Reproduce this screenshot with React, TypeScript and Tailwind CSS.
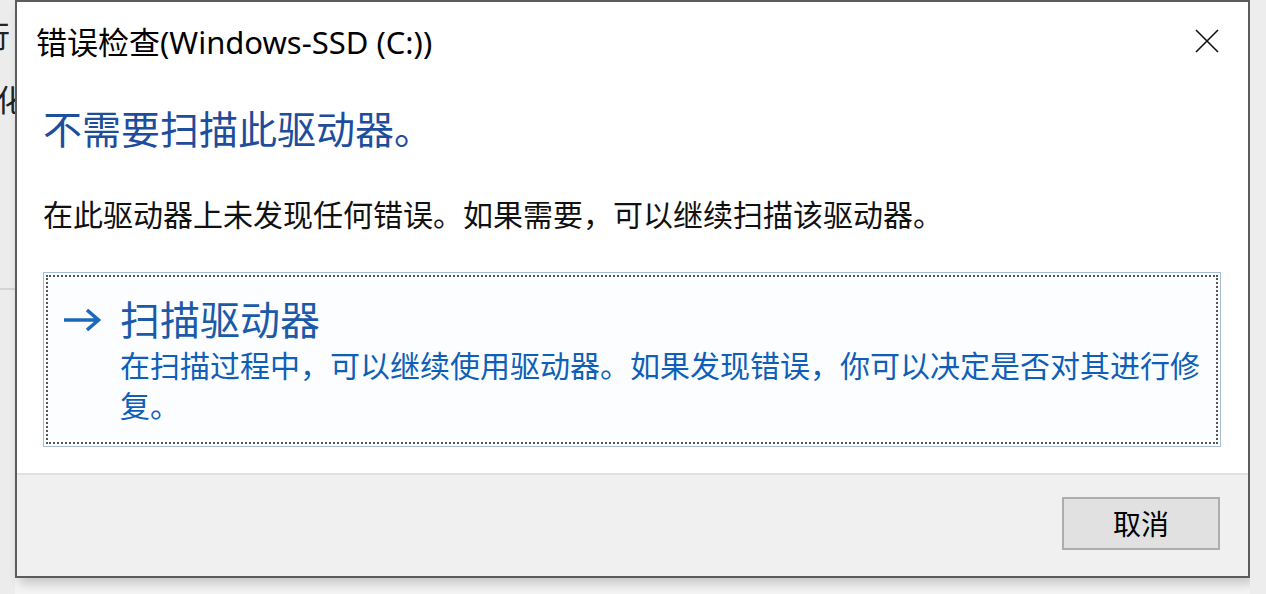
import React from "react";

const cjk = '"Noto Sans", "Noto Sans CJK SC", sans-serif';

export default function App() {
  return (
    <div
      className="w-[1266px] h-[594px] bg-[#f4f4f4] flex overflow-hidden"
      style={{ fontFamily: cjk }}
    >
      {/* left background window strip */}
      <div className="w-[15px] h-full shrink-0 bg-[#ececec] flex flex-col overflow-hidden">
        <div className="h-[290px] border-b-2 border-[#d4d4d4] flex flex-col">
          <div className="text-[30px] leading-[40px] text-[#222] ml-[-20px] mt-[16px] whitespace-nowrap">行</div>
          <div className="text-[30px] leading-[40px] text-[#222] ml-[-4px] mt-[24px] whitespace-nowrap">化</div>
        </div>
      </div>

      {/* dialog */}
      <div className="w-[1235px] h-[578px] shrink-0 border-2 border-[#5c5c5c] bg-white flex flex-col shadow-[4px_6px_10px_rgba(0,0,0,0.18)]">
        {/* title bar */}
        <div className="h-[78px] flex items-start justify-between pl-[19px] pr-[28px] pt-[20px]">
          <div className="text-[31px] leading-[40px] text-black whitespace-nowrap">
            错误检查(Windows-SSD (C:))
          </div>
          <svg width="26" height="26" viewBox="0 0 26 26" className="mt-[6px]">
            <path d="M2 2 L24 24 M24 2 L2 24" stroke="#111" strokeWidth="1.6" fill="none" />
          </svg>
        </div>

        {/* content */}
        <div className="flex-1 flex flex-col pl-[26px] pr-[26px]">
          <div className="text-[39px] leading-[48px] text-[#1e4d9b] whitespace-nowrap mt-[25px]">
            不需要扫描此驱动器。
          </div>
          <div className="text-[30px] leading-[40px] text-[#111] whitespace-nowrap mt-[42px]">
            在此驱动器上未发现任何错误。如果需要，可以继续扫描该驱动器。
          </div>
          <div className="mt-[37px] w-[1178px] h-[175px] border border-[#a9bdd6] bg-[#fbfdff] p-[2px]">
            <div className="w-full h-full border-2 border-dotted border-[#555] flex pl-[14px] pt-[22px]">
              <div className="w-[58px] shrink-0 pt-[9px]">
                <svg width="40" height="24" viewBox="0 0 40 24">
                  <path d="M2 12 H36 M25 2 L36.5 12 L25 22" stroke="#1d68bd" strokeWidth="3.6" fill="none" strokeLinejoin="miter" />
                </svg>
              </div>
              <div className="flex flex-col">
                <div className="text-[40px] leading-[48px] text-[#1b5aa8] whitespace-nowrap mt-[-3px]">
                  扫描驱动器
                </div>
                <div className="w-[1092px] text-[30px] leading-[40px] text-[#0f5fb8] mt-[2px]">
                  在扫描过程中，可以继续使用驱动器。如果发现错误，你可以决定是否对其进行修复。
                </div>
              </div>
            </div>
          </div>
        </div>

        {/* footer */}
        <div className="h-[103px] bg-[#f0f0f0] border-t-2 border-[#e0e0e0] flex justify-end items-start pr-[28px] pt-[22px]">
          <button className="w-[158px] h-[53px] bg-[#e1e1e1] border-2 border-[#adadad] text-[28px] leading-none text-black flex items-center justify-center">
            取消
          </button>
        </div>
      </div>

      {/* right background */}
      <div className="flex-1 h-full bg-[#ededed]" />
    </div>
  );
}
